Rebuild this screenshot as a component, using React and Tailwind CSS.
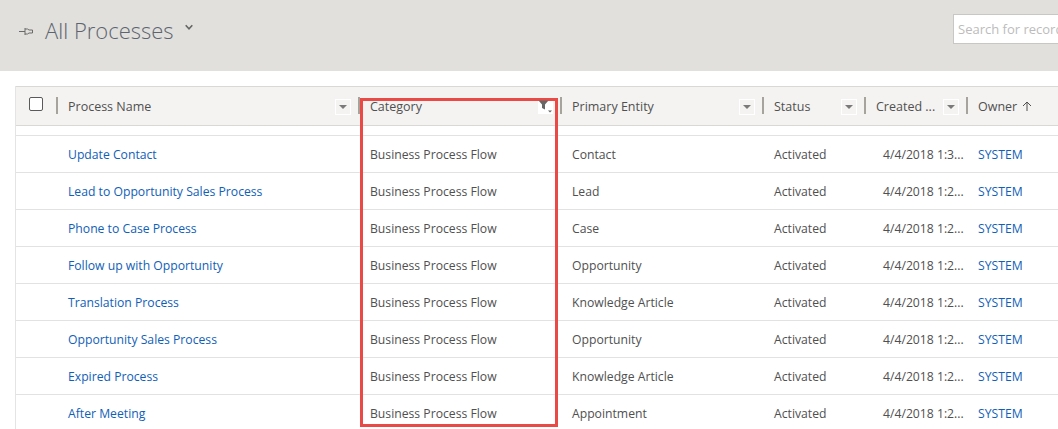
import React from "react";

const rows = [
  ["Update Contact", "Contact", "4/4/2018 1:3..."],
  ["Lead to Opportunity Sales Process", "Lead", "4/4/2018 1:2..."],
  ["Phone to Case Process", "Case", "4/4/2018 1:2..."],
  ["Follow up with Opportunity", "Opportunity", "4/4/2018 1:2..."],
  ["Translation Process", "Knowledge Article", "4/4/2018 1:2..."],
  ["Opportunity Sales Process", "Opportunity", "4/4/2018 1:2..."],
  ["Expired Process", "Knowledge Article", "4/4/2018 1:2..."],
  ["After Meeting", "Appointment", "4/4/2018 1:2..."],
];

const gridCols = "grid grid-cols-[41px_302px_202px_202px_102px_102px_1fr]";

function Pin() {
  return (
    <svg width="15" height="9" viewBox="0 0 15 9" fill="none" stroke="#6b6b6b" strokeWidth="1" className="shrink-0">
      <path d="M0 4.5H6M6 1V8M6 2H8.5L10 3H13.5V6H10L8.5 7H6" />
    </svg>
  );
}

function Chevron() {
  return (
    <svg width="8" height="7" viewBox="0 0 8 7" fill="none" stroke="#666" strokeWidth="1.6">
      <path d="M0.7 1.2L4 4.8L7.3 1.2" />
    </svg>
  );
}

function MenuButton() {
  return (
    <span className="w-4 h-4 border border-white flex items-center justify-center shrink-0">
      <span className="w-0 h-0 border-l-[4px] border-r-[4px] border-t-[4px] border-l-transparent border-r-transparent border-t-[#7a7a7a]" />
    </span>
  );
}

function FilterButton() {
  return (
    <span className="w-[15px] h-[15px] bg-white shrink-0 flex justify-center -mt-[2px]">
      <svg width="15" height="14" viewBox="0 0 15 14" className="relative z-10 mt-[1px]">
        <path d="M0.5 0.5H10.5L7 4.5V9.5L4 8V4.5Z" fill="#666" />
        <path d="M10 10.5H14L12 12.5Z" fill="#666" />
      </svg>
    </span>
  );
}

function HeadCell({ label, children }) {
  return (
    <div className="flex items-center pl-[11px] pr-[8px] pt-[2px] relative h-full">
      <span className="absolute left-[-1px] top-[10px] w-[2px] h-[17px] bg-[#a6a39c]" />
      <span className="text-[#505050] text-[12.5px] whitespace-nowrap">{label}</span>
      <span className="flex-1" />
      {children}
    </div>
  );
}

export default function App() {
  return (
    <div className="relative w-[1058px] h-[429px] overflow-hidden bg-white font-['Open_Sans','Noto_Sans',sans-serif] text-[12.2px]">
      <header className="h-[71px] bg-[#e1e0dc] flex items-start pl-[19px] relative">
        <div className="mt-[27px]"><Pin /></div>
        <h1 className="ml-[11px] mt-[15px] text-[22px] leading-[30px] font-light text-[#5c6470] whitespace-nowrap">All Processes</h1>
        <div className="ml-[11px] mt-[24px]"><Chevron /></div>
        <div className="absolute left-[953px] top-[14px] w-[110px] h-[30px] bg-white border border-[#c8c7c3] flex items-center pl-[4px] pt-[2px] text-[13px] text-[#bcbcbc] whitespace-nowrap overflow-hidden">
          Search for records
        </div>
      </header>

      <section className="mt-[15px] ml-[15px] border-l border-[#e4e4e4] h-[343px]">
        <div className={`${gridCols} h-[40px] bg-[#f4f3f1] border-t border-b border-[#d9d8d4] items-center`}>
          <div className="h-full flex items-center pl-[13px] pb-[5px]">
            <span className="w-[14px] h-[14px] border border-[#5a5a5a] rounded-[2px] bg-white" />
          </div>
          <HeadCell label="Process Name"><MenuButton /></HeadCell>
          <HeadCell label="Category"><FilterButton /></HeadCell>
          <HeadCell label="Primary Entity"><MenuButton /></HeadCell>
          <HeadCell label="Status"><MenuButton /></HeadCell>
          <HeadCell label="Created ..."><MenuButton /></HeadCell>
          <HeadCell label="Owner">
            <span className="absolute left-[55px] top-[14px]">
              <svg width="10" height="10" viewBox="0 0 10 10" fill="none" stroke="#505050" strokeWidth="1">
                <path d="M5 10V1M1 5L5 1L9 5" />
              </svg>
            </span>
          </HeadCell>
        </div>
        <div className="h-[9px]" />
        <div className="border-t border-[#e2e2e2]">
          {rows.map(([name, entity, date]) => (
            <div key={name} className={`${gridCols} h-[37px] pt-[2px] border-b border-[#e2e2e2] last:border-b-0 items-center text-[#505050]`}>
              <div />
              <div className="pl-[11px] text-[#1160b7] whitespace-nowrap">{name}</div>
              <div className="pl-[11px] whitespace-nowrap">Business Process Flow</div>
              <div className="pl-[11px] whitespace-nowrap">{entity}</div>
              <div className="pl-[11px] whitespace-nowrap">Activated</div>
              <div className="pl-[18px] whitespace-nowrap">{date}</div>
              <div className="pl-[11px] text-[#1160b7] whitespace-nowrap">SYSTEM</div>
            </div>
          ))}
        </div>
      </section>

      <div className="absolute left-[360px] top-[98px] w-[198px] h-[329px] border-[3px] border-[#ea4a45] pointer-events-none" />
    </div>
  );
}
